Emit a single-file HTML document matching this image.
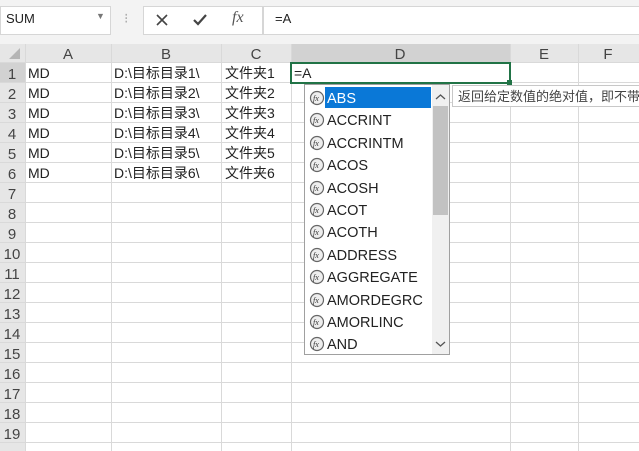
<!DOCTYPE html><html><head><style>
body{margin:0;width:639px;height:451px;overflow:hidden;background:#fff;font-family:"Liberation Sans","Noto Sans CJK SC",sans-serif;position:relative}
.a{position:absolute}
.tb{left:0;top:0;width:639px;height:44px;background:#f3f3f3}
.cell{font-size:14px;color:#222}
</style></head><body>
<div class="a tb"></div>
<div class="a" style="left:0;top:6px;width:109px;height:27px;background:#fff;border:1px solid #d6d6d6"></div>
<div class="a cell" style="left:6px;top:11px;font-size:13px">SUM</div>
<div class="a" style="left:96px;top:11px;font-size:9px;color:#777">▼</div>
<div class="a" style="left:124px;top:10px;font-size:14px;color:#aaa">⁝</div>
<div class="a" style="left:143px;top:6px;width:118px;height:27px;background:#fff;border:1px solid #d6d6d6"></div>
<svg class="a" style="left:155px;top:13px" width="14" height="14"><path d="M2 2L12 12M12 2L2 12" stroke="#444" stroke-width="1.6"/></svg>
<svg class="a" style="left:192px;top:13px" width="16" height="14"><path d="M2 7L6 11L14 2" stroke="#444" stroke-width="2.2" fill="none"/></svg>
<div class="a" style="left:232px;top:9px;font-family:'Liberation Serif',serif;font-style:italic;font-size:16px;color:#555">fx</div>
<div class="a" style="left:263px;top:6px;width:376px;height:27px;background:#fff;border:1px solid #d6d6d6;border-right:none"></div>
<div class="a cell" style="left:275px;top:11px;font-size:13px">=A</div>
<svg class="a" style="left:0;top:44px" width="639" height="407">
<rect x="0" y="0" width="639" height="19" fill="#e6e6e6"/>
<rect x="0" y="0" width="25" height="407" fill="#e6e6e6"/>
<rect x="291" y="0" width="219" height="19" fill="#d2d2d2"/>
<rect x="0" y="19" width="25" height="20" fill="#d2d2d2"/>
<path d="M20 4L20 15L9 15Z" fill="#b5b5b5"/>
<g stroke="#d9d9d9" stroke-width="1">
<path d="M25.5 0V407M111.5 0V407M221.5 0V407M291.5 0V407M510.5 0V407M578.5 0V407"/>
<path d="M0 18.5H639M0 38.5H639M0 58.5H639M0 78.5H639M0 98.5H639M0 118.5H639M0 138.5H639M0 158.5H639M0 178.5H639M0 198.5H639M0 218.5H639M0 238.5H639M0 258.5H639M0 278.5H639M0 298.5H639M0 318.5H639M0 338.5H639M0 358.5H639M0 378.5H639M0 398.5H639"/>
</g>
<rect x="291" y="19" width="219" height="20" fill="none" stroke="#217346" stroke-width="2"/>
<rect x="507" y="36" width="5" height="5" fill="#217346"/>
<g font-size="15" fill="#444" text-anchor="middle" font-family="Liberation Sans,sans-serif">
<text x="68" y="15">A</text><text x="166" y="15">B</text><text x="256" y="15">C</text><text x="400" y="15">D</text><text x="544" y="15">E</text><text x="608" y="15">F</text>
</g>
<g font-size="15" fill="#444" text-anchor="middle" font-family="Liberation Sans,sans-serif">
<text x="12" y="35">1</text><text x="12" y="55">2</text><text x="12" y="75">3</text><text x="12" y="95">4</text><text x="12" y="115">5</text><text x="12" y="135">6</text><text x="12" y="155">7</text><text x="12" y="175">8</text><text x="12" y="195">9</text><text x="12" y="215">10</text><text x="12" y="235">11</text><text x="12" y="255">12</text><text x="12" y="275">13</text><text x="12" y="295">14</text><text x="12" y="315">15</text><text x="12" y="335">16</text><text x="12" y="355">17</text><text x="12" y="375">18</text><text x="12" y="395">19</text>
</g>
<g font-size="14" fill="#222" font-family="Liberation Sans,Noto Sans CJK SC,sans-serif">
<text x="28" y="34">MD</text><text x="114" y="34">D:\目标目录1\</text><text x="225" y="34">文件夹1</text><text x="294" y="34">=A</text>
<text x="28" y="54">MD</text><text x="114" y="54">D:\目标目录2\</text><text x="225" y="54">文件夹2</text>
<text x="28" y="74">MD</text><text x="114" y="74">D:\目标目录3\</text><text x="225" y="74">文件夹3</text>
<text x="28" y="94">MD</text><text x="114" y="94">D:\目标目录4\</text><text x="225" y="94">文件夹4</text>
<text x="28" y="114">MD</text><text x="114" y="114">D:\目标目录5\</text><text x="225" y="114">文件夹5</text>
<text x="28" y="134">MD</text><text x="114" y="134">D:\目标目录6\</text><text x="225" y="134">文件夹6</text>
</g>
</svg>
<svg class="a" style="left:304px;top:84px" width="335" height="272">
<rect x="0.5" y="0.5" width="145" height="270" fill="#fff" stroke="#a0a0a0"/>
<rect x="128" y="1" width="17" height="269" fill="#f0f0f0"/>
<rect x="129" y="22" width="15" height="109" fill="#c2c2c2"/>
<path d="M132 15L136.5 11L141 15M132 258L136.5 262L141 258" stroke="#555" stroke-width="1.3" fill="none"/>
<rect x="21" y="3" width="106" height="21" fill="#0a78d7"/>
<rect x="148.5" y="1.5" width="190" height="21" fill="#fff" stroke="#c8c8c8"/>
<text x="154" y="17" font-size="13" fill="#444" font-family="Liberation Sans,Noto Sans CJK SC,sans-serif">返回给定数值的绝对值，即不带符号的数值</text>
<g font-size="14.5" font-family="Liberation Sans,sans-serif" fill="#222">
<text x="23" y="19" fill="#fff">ABS</text>
<text x="23" y="41">ACCRINT</text><text x="23" y="64">ACCRINTM</text><text x="23" y="86">ACOS</text><text x="23" y="109">ACOSH</text><text x="23" y="131">ACOT</text><text x="23" y="153">ACOTH</text><text x="23" y="176">ADDRESS</text><text x="23" y="198">AGGREGATE</text><text x="23" y="221">AMORDEGRC</text><text x="23" y="243">AMORLINC</text><text x="23" y="265">AND</text>
</g>
<g fill="#eee" stroke="#666" stroke-width="1.2">
<circle cx="13" cy="14" r="6.5"/><circle cx="13" cy="36" r="6.5"/><circle cx="13" cy="59" r="6.5"/><circle cx="13" cy="81" r="6.5"/><circle cx="13" cy="104" r="6.5"/><circle cx="13" cy="126" r="6.5"/><circle cx="13" cy="148" r="6.5"/><circle cx="13" cy="171" r="6.5"/><circle cx="13" cy="193" r="6.5"/><circle cx="13" cy="216" r="6.5"/><circle cx="13" cy="238" r="6.5"/><circle cx="13" cy="260" r="6.5"/>
</g>
<g font-size="8" font-style="italic" fill="#333" font-family="Liberation Serif,serif">
<text x="9" y="17">fx</text><text x="9" y="39">fx</text><text x="9" y="62">fx</text><text x="9" y="84">fx</text><text x="9" y="107">fx</text><text x="9" y="129">fx</text><text x="9" y="151">fx</text><text x="9" y="174">fx</text><text x="9" y="196">fx</text><text x="9" y="219">fx</text><text x="9" y="241">fx</text><text x="9" y="263">fx</text>
</g>
</svg>
</body></html>
